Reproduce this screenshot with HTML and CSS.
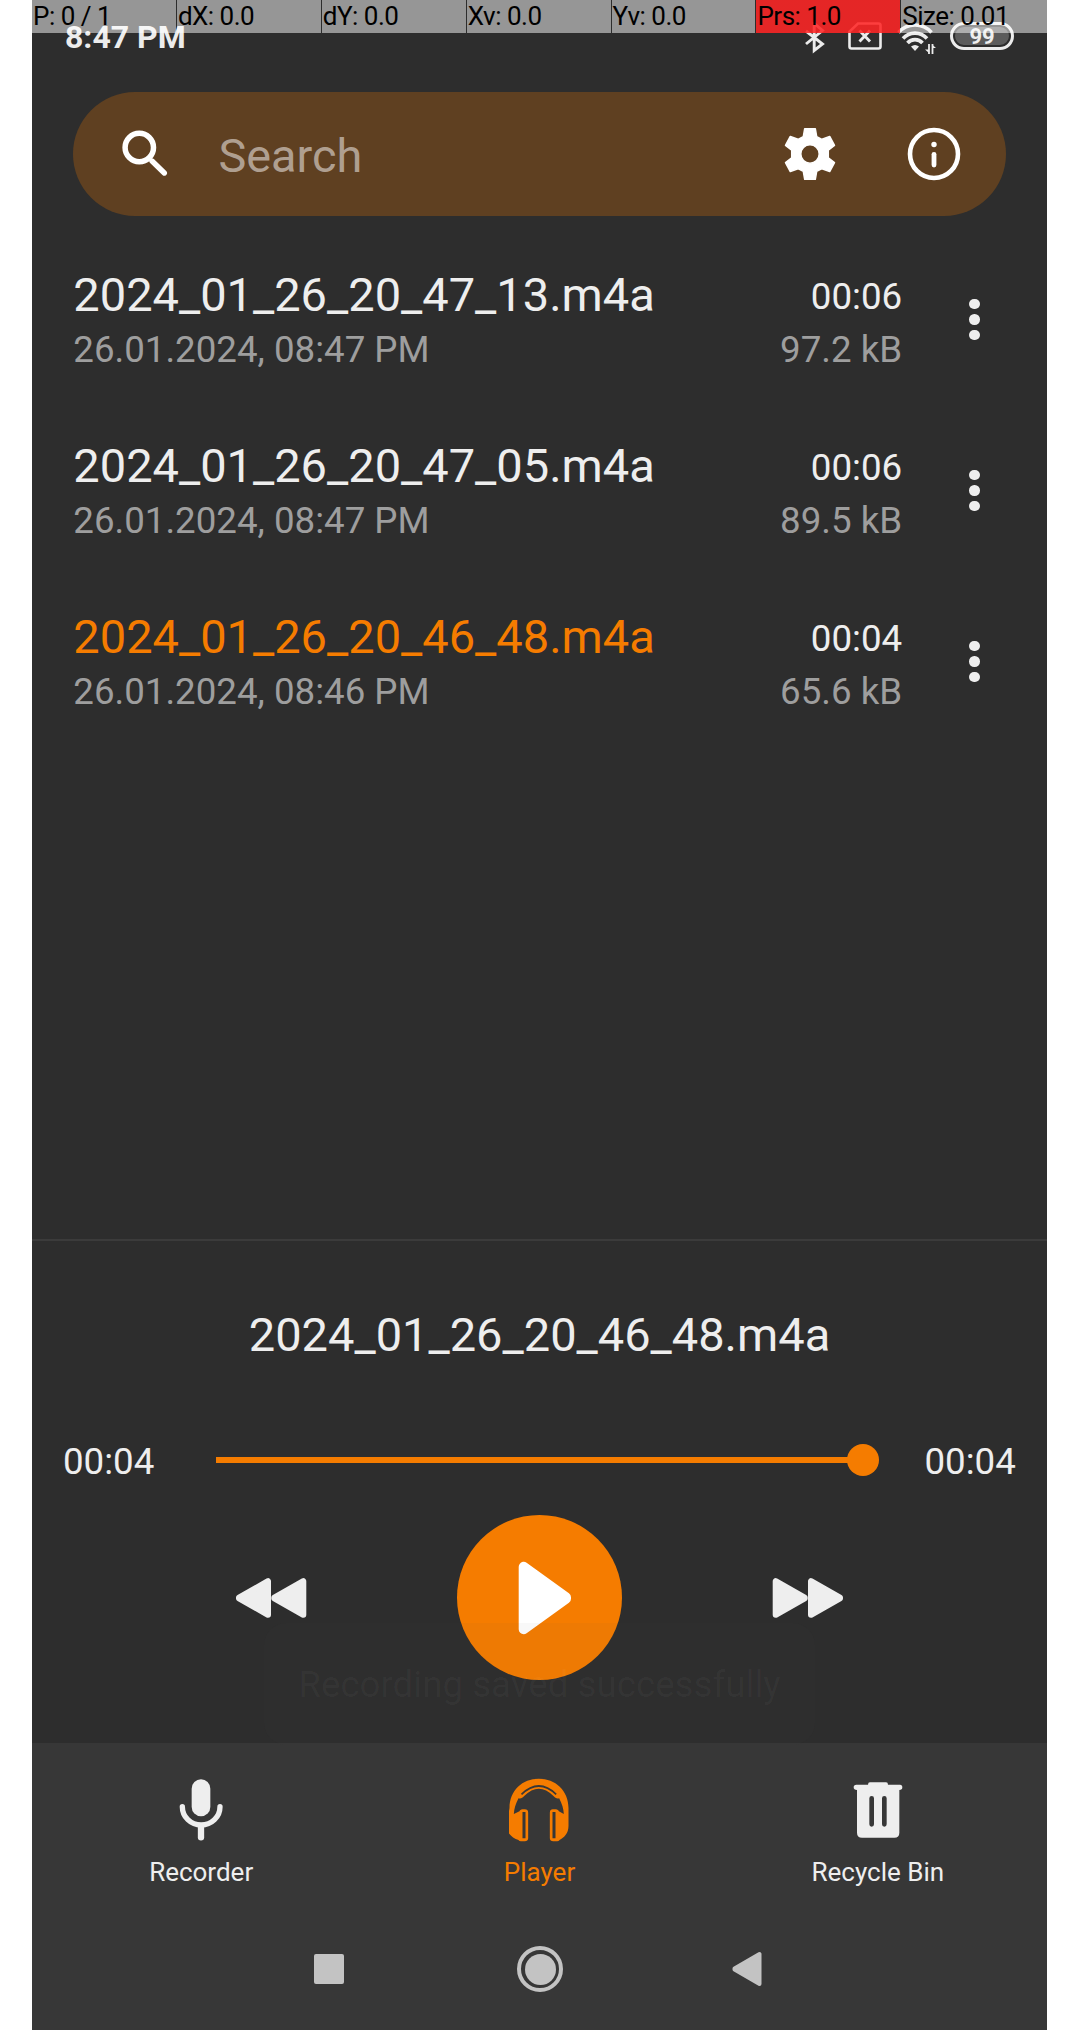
FILE: index.html
```html
<!DOCTYPE html>
<html lang="en">
<head>
<meta charset="utf-8">
<title>Voice Recorder</title>
<link rel="stylesheet" href="styles.css">
</head>
<body>
<div class="screen">
  <header class="status">
    <span class="clock">8:47 PM</span>
    <div class="status-icons">
      <svg class="bt" width="20" height="32" viewBox="0 0 20 32" fill="none" stroke="#ececec" stroke-width="2.900"><path d="M1 9 17.500 22 9.200 28.500V1.500L17.500 8.500 1 22"/></svg>
      <svg class="sim" width="34" height="28" viewBox="0 0 34 28" fill="none" stroke="#ececec" stroke-width="2.600"><path d="M10 1.500H30.500a2 2 0 0 1 2 2v21a2 2 0 0 1-2 2H3.500a2 2 0 0 1-2-2V9.500z"/><path d="M11.500 8.500l10.500 11M22 8.500 11.500 19.500" stroke-width="2.900"/></svg>
      <svg class="wifi" width="40" height="32" viewBox="0 0 40 32" fill="none" stroke="#ececec" stroke-width="3.600"><path d="M1.500 10.500a22 22 0 0 1 33 0M6 16.500a16 16 0 0 1 24 0M10.500 21a10 10 0 0 1 15 0"/><path d="M14 24.500q4-3 8 0L18 29z" fill="#ececec" stroke="none"/><path d="M32 22v10M35.500 22v10" stroke-width="1.800"/><path d="M28 27.500h4V31zM39 26h-4v-3.500z" fill="#ececec" stroke="none"/></svg>
      <span class="battery">99</span>
    </div>
  </header>

  <div class="pointer-bar">
    <span>P: 0 / 1</span><span>dX: 0.0</span><span>dY: 0.0</span><span>Xv: 0.0</span><span>Yv: 0.0</span><span class="hot">Prs: 1.0</span><span>Size: 0.01</span>
  </div>

  <div class="search">
    <svg class="glass" width="46" height="46" viewBox="0 0 46 46" fill="none" stroke="#fff"><circle cx="17.300" cy="17.500" r="14.200" stroke-width="5.500"/><path d="M30 31l12.300 12" stroke-width="5.400" stroke-linecap="round"/></svg>
    <span class="placeholder">Search</span>
    <svg width="54" height="54" viewBox="-27 -27 54 54"><path fill="#fff" stroke="#fff" stroke-width="1.500" stroke-linejoin="round" fill-rule="evenodd" d="M-5.300-25.300H5.300L6.700-17.300 12-14.700 19.700-17.600 24.500-8.600 18.300-3.800V3.800L24.500 8.600 19.700 17.600 12 14.700 6.700 17.300 5.300 25.300H-5.300L-6.700 17.300-12 14.700-19.700 17.600-24.500 8.600-18.300 3.800V-3.800L-24.500-8.600-19.700-17.600-12-14.700-6.700-17.300zM0-9.200A9.200 9.200 0 1 0 0 9.200 9.200 9.200 0 1 0 0-9.200z"/></svg>
    <svg class="info" width="54" height="54" viewBox="-27 -27 54 54" fill="none" stroke="#fff"><circle r="24" stroke-width="4.600"/><circle cy="-9.500" r="2.700" fill="#fff" stroke="none"/><path d="M0 .3V11" stroke-width="4.800" stroke-linecap="round"/></svg>
  </div>

  <main class="list">
    <div class="row">
      <div class="left"><div class="name">2024_01_26_20_47_13.m4a</div><div class="sub">26.01.2024, 08:47 PM</div></div>
      <div class="right"><div class="time">00:06</div><div class="size">97.2 kB</div></div>
      <div class="more"><i></i><i></i><i></i></div>
    </div>
    <div class="row">
      <div class="left"><div class="name">2024_01_26_20_47_05.m4a</div><div class="sub">26.01.2024, 08:47 PM</div></div>
      <div class="right"><div class="time">00:06</div><div class="size">89.5 kB</div></div>
      <div class="more"><i></i><i></i><i></i></div>
    </div>
    <div class="row active">
      <div class="left"><div class="name">2024_01_26_20_46_48.m4a</div><div class="sub">26.01.2024, 08:46 PM</div></div>
      <div class="right"><div class="time">00:04</div><div class="size">65.6 kB</div></div>
      <div class="more"><i></i><i></i><i></i></div>
    </div>
  </main>

  <section class="player">
    <div class="title">2024_01_26_20_46_48.m4a</div>
    <div class="progress">
      <span class="stamp">00:04</span>
      <div class="track"><div class="line"></div><div class="thumb"></div></div>
      <span class="stamp">00:04</span>
    </div>
    <div class="controls">
      <svg width="72" height="42" viewBox="0 0 72 42" fill="#eee" stroke="#eee" stroke-width="6" stroke-linejoin="round"><path d="M33 4.200V37.800L4 21.500v-1zM68.300 4.200V37.800L39.300 21.500v-1z"/></svg>
      <div class="play"><svg width="54" height="74" viewBox="0 0 54 74" fill="#fff" stroke="#fff" stroke-width="10" stroke-linejoin="round"><path d="M5.700 5.800V68.200L48 37.800v-1.600z"/></svg></div>
      <svg width="72" height="42" viewBox="0 0 72 42" fill="#eee" stroke="#eee" stroke-width="6" stroke-linejoin="round"><path d="M3.700 4.200V37.800L32.700 21.500v-1zM39 4.200V37.800L68 21.500v-1z"/></svg>
    </div>
    <div class="toast">Recording saved successfully</div>
  </section>

  <nav class="tabs">
    <div class="tab">
      <svg width="60" height="66" viewBox="152 140 180 198" fill="none" stroke="#eee" stroke-linecap="round"><rect x="214" y="147" width="56" height="111" rx="28" fill="#eee" stroke="none"/><path d="M186 229a56 54.500 0 0 0 113 0" stroke-width="16"/><path d="M242 288v33" stroke-width="19"/></svg>
      <span>Recorder</span>
    </div>
    <div class="tab on">
      <svg width="60" height="66" viewBox="1165.500 140 180 198"><path fill="#f57c00" d="M1167 233C1167 180 1206 145 1255 145s89 35 89 88v54c0 22-13 35-27 42-2 3-5 4-10 4h-9c-6 0-10-3-10-9v-77c0-7 4-10 9-10h9c5 0 8 3 9 6l15 8c-1-16-5-29-14-47-7 2-12-1-17-7q-44-44-88 0c-5 6-10 9-17 7-9 18-13 31-14 47l17-8c1-3 4-6 9-6h7c6 0 10 3 10 10v77c0 6-4 9-10 9h-9c-5 0-8-1-10-4-20-7-36-22-36-42z"/><path fill="none" stroke="#373737" stroke-width="5" d="M1203 192q52-50 104 0"/><path fill="#373737" d="M1206 245h9v79h-9zM1296 245h9v79h-9z"/></svg>
      <span>Player</span>
    </div>
    <div class="tab">
      <svg width="60" height="66" viewBox="682 140 180 198" fill="#eee"><path d="M748 156h48q6 0 6 7h36q7 0 7 8t-9 8v128q0 15-15 15H724q-15 0-15-15V179q-10 0-10-8t8-8h35q0-7 6-7z"/><path d="M753 204v78M791 204v78" stroke="#373737" stroke-width="14" stroke-linecap="round"/></svg>
      <span>Recycle Bin</span>
    </div>
  </nav>

  <footer class="system">
    <div class="recent"></div>
    <div class="home"><i></i></div>
    <svg class="back" width="30" height="36" viewBox="0 0 30 36" fill="#c3c3c3" stroke="#c3c3c3" stroke-width="4" stroke-linejoin="round"><path d="M27.500 3V33L2.500 18.500v-1z"/></svg>
  </footer>
</div>
</body>
</html>
```
FILE: styles.css
```css
* { box-sizing: border-box; }
body {
  margin: 0;
  background: #fff;
  font-family: Roboto, sans-serif;
}
svg { display: block; flex: none; }

.screen {
  position: relative;
  width: 1015px;
  height: 2030px;
  margin-left: 32px;
  background: #2d2d2d;
  color: #eee;
  display: flex;
  flex-direction: column;
  overflow: hidden;
  white-space: nowrap;
}

.status {
  height: 92px;
  padding: 20px 33px 0 33px;
  display: flex;
  justify-content: space-between;
  align-items: flex-start;
  flex: none;
}
.clock {
  font-size: 32px;
  font-weight: 700;
  line-height: 34px;
  color: #ececec;
}
.status-icons {
  display: flex;
  align-items: flex-start;
  padding-top: 2px;
}
.sim { margin-left: 23px; }
.wifi { margin-left: 15px; }
.battery {
  width: 64px;
  height: 28px;
  margin-left: 13px;
  border: 3px solid #ececec;
  border-radius: 14px;
  background: #5c5c5c;
  box-shadow: inset 0 0 0 2px #2d2d2d;
  font-size: 22px;
  font-weight: 700;
  line-height: 23px;
  text-align: center;
}

.pointer-bar {
  position: absolute;
  inset: 0 0 auto 0;
  height: 33px;
  display: grid;
  grid-template-columns: repeat(6, 143.9px) 1fr;
  column-gap: 1px;
  color: #000;
  font-size: 26px;
  letter-spacing: -.5px;
  line-height: 33px;
}
.pointer-bar span {
  background: rgba(255, 255, 255, .5);
  padding-left: 1px;
}
.pointer-bar .hot {
  background: linear-gradient(rgba(255, 0, 0, .75), rgba(255, 0, 0, .75)), rgba(255, 255, 255, .5);
}

.search {
  height: 124px;
  margin: 0 41px;
  padding: 0 45px 0 49px;
  border-radius: 62px;
  background: #5f4021;
  display: flex;
  align-items: center;
  flex: none;
}
.glass { margin-top: -3px; }
.placeholder {
  flex: 1;
  margin-left: 50.5px;
  padding-top: 3px;
  font-size: 46.8px;
  color: #af9f90;
}
.info { margin-left: 70px; }

.list {
  flex: 1;
  padding-top: 18px;
}
.row {
  height: 171px;
  padding: 35px 67.3px 0 41.3px;
  display: flex;
}
.left { flex: 1; }
.name { font-size: 47px; line-height: 52px; }
.active .name { color: #f57c00; }
.sub { font-size: 36.7px; line-height: 57px; color: #9e9e9e; }
.right { text-align: right; }
.time { font-size: 36.7px; line-height: 55px; }
.size { font-size: 36.7px; line-height: 51px; color: #9e9e9e; }
.more {
  margin-left: 67px;
  padding-top: 29.500px;
  display: flex;
  flex-direction: column;
  gap: 5px;
}
.more i {
  width: 10.5px;
  height: 10.5px;
  border-radius: 50%;
  background: #eee;
}

.player {
  position: relative;
  height: 504px;
  padding-top: 66px;
  border-top: 2px solid #3b3b3b;
  flex: none;
}
.title {
  font-size: 47px;
  line-height: 56px;
  text-align: center;
}
.progress {
  height: 50px;
  margin: 72px 31px 0 31px;
  display: flex;
  align-items: center;
}
.stamp { width: 92px; font-size: 36.7px; line-height: 46px; padding-top: 4px; }
.track {
  width: 663px;
  margin: 0 46px 0 61px;
  display: flex;
  align-items: center;
  flex: none;
}
.line { flex: 1; height: 6px; background: #f57c00; }
.thumb { width: 32px; height: 32px; margin-left: -2px; border-radius: 50%; background: #f57c00; }
.controls {
  height: 165px;
  margin: 30px 203px 0;
  display: flex;
  justify-content: space-between;
  align-items: center;
}
.play {
  width: 165px;
  height: 165px;
  padding-left: 10px;
  border-radius: 50%;
  background: #f57c00;
  display: flex;
  align-items: center;
  justify-content: center;
}
.toast {
  position: absolute;
  left: 232px;
  top: 382px;
  width: 551px;
  height: 122px;
  border-radius: 22px;
  background: rgba(66, 66, 66, .04);
  color: rgba(255, 255, 255, .035);
  font-size: 36.7px;
  line-height: 123px;
  text-align: center;
}

.tabs {
  height: 167px;
  background: #373737;
  display: grid;
  grid-template-columns: repeat(3, 1fr);
  flex: none;
}
.tab {
  padding-top: 34px;
  display: flex;
  flex-direction: column;
  align-items: center;
  font-size: 26px;
  line-height: 36px;
}
.tab span { margin-top: 11px; }
.on { color: #f57c00; }

.system {
  height: 120px;
  padding: 0 285.500px 2px 282px;
  background: #373737;
  display: flex;
  align-items: center;
  flex: none;
}
.recent { width: 30px; height: 30px; border-radius: 2px; background: #c3c3c3; }
.home {
  width: 46px;
  height: 46px;
  margin: 0 auto 0 173px;
  padding: 3.500px;
  border: 4px solid #c3c3c3;
  border-radius: 50%;
}
.home i { display: block; width: 31px; height: 31px; border-radius: 50%; background: #c3c3c3; }
```
